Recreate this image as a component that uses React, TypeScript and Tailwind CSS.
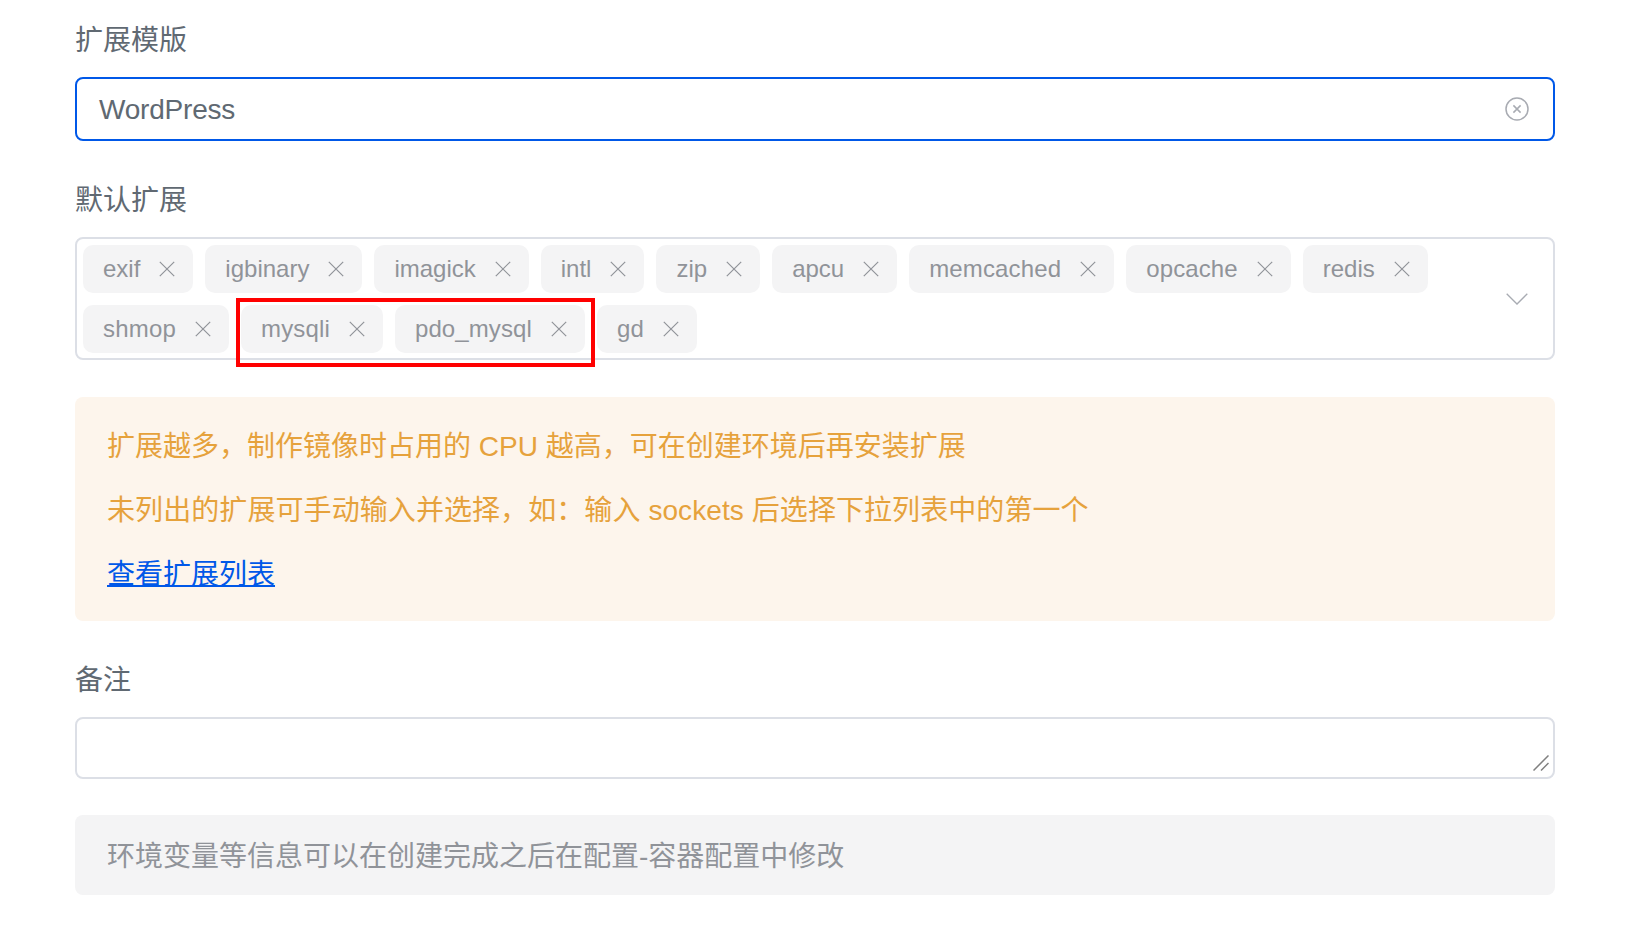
const FONT = "font-['Liberation_Sans','Noto_Sans_CJK_SC',sans-serif]";

function X({ className }: { className?: string }) {
  return (
    <svg viewBox="0 0 16 16" className={className} fill="none" stroke="currentColor" strokeWidth="1.2">
      <path d="M0.8 0.8 L15.2 15.2 M15.2 0.8 L0.8 15.2" />
    </svg>
  );
}

function Tag({ label, textClass }: { label: string; textClass?: string }) {
  return (
    <div className="flex h-12 items-center gap-[19px] rounded-[10px] bg-[#f4f4f5] pl-5 pr-[18px] text-[24px] text-[#909399]">
      <span className={textClass}>{label}</span>
      <X className="h-[16px] w-[16px]" />
    </div>
  );
}

const row1: [string, string?][] = [
  ["exif"],
  ["igbinary"],
  ["imagick"],
  ["intl"],
  ["zip"],
  ["apcu"],
  ["memcached", "tracking-[0.15px]"],
  ["opcache", "tracking-[0.1px]"],
  ["redis"],
];
const row2: [string, string?][] = [
  ["shmop", "tracking-[0.2px]"],
  ["mysqli", "tracking-[0.15px]"],
  ["pdo_mysql", "tracking-[0.1px]"],
  ["gd", "tracking-[0.2px]"],
];

function Label({ children, className }: { children: string; className?: string }) {
  return <div className={`mb-5 h-9 text-[28px] leading-[40px] text-[#606972] ${className ?? ""}`}>{children}</div>;
}

export default function App() {
  return (
    <div className={`${FONT} relative h-[932px] w-[1640px] overflow-hidden bg-white pl-[75px] pr-[85px] pt-[21px]`}>
      <Label>扩展模版</Label>

      <div className="flex h-16 items-center justify-between rounded-lg border-2 border-[#0058e8] pl-[22px] pr-6 text-[28px] text-[#606972]">
        <span className="pt-[2px] tracking-[-0.2px]">WordPress</span>
        <svg viewBox="0 0 24 24" className="h-6 w-6 text-[#a8abb2]" fill="none" stroke="currentColor" strokeWidth="1.5">
          <circle cx="12" cy="12" r="11" />
          <path d="M8.4 8.4 L15.6 15.6 M15.6 8.4 L8.4 15.6" />
        </svg>
      </div>

      <Label className="mt-10">默认扩展</Label>

      <div className="flex h-[123px] items-center justify-between rounded-lg border-2 border-[#dcdfe6] pl-[6px] pr-[25px]">
        <div className="flex flex-col gap-3">
          <div className="flex gap-3">
            {row1.map(([t, c]) => (
              <Tag key={t} label={t} textClass={c} />
            ))}
          </div>
          <div className="flex gap-3">
            {row2.map(([t, c]) => (
              <Tag key={t} label={t} textClass={c} />
            ))}
          </div>
        </div>
        <svg viewBox="0 0 22 12" className="h-3 w-[22px] text-[#a8abb2]" fill="none" stroke="currentColor" strokeWidth="1.3">
          <path d="M0.7 0.7 L11 11 L21.3 0.7" />
        </svg>
      </div>

      <div className="mt-[37px] flex h-[224px] flex-col justify-center gap-5 rounded-lg bg-[#fdf5ec] px-8 pt-1 text-[28px] leading-[44px] text-[#e6a23c]">
        <p>扩展越多，制作镜像时占用的 CPU 越高，可在创建环境后再安装扩展</p>
        <p className="tracking-[0.08px]">未列出的扩展可手动输入并选择，如：输入 sockets 后选择下拉列表中的第一个</p>
        <a className="text-[#0058e8] underline decoration-2">查看扩展列表</a>
      </div>

      <Label className="mt-10">备注</Label>

      <div className="relative h-[62px] rounded-lg border-2 border-[#dcdfe6]">
        <svg viewBox="0 0 16 16" className="absolute bottom-[6px] right-[4px] h-4 w-4 text-[#808080]" fill="none" stroke="currentColor" strokeWidth="1.5">
          <path d="M0.5 15.5 L15.5 0.5 M8 15.5 L15.5 8" />
        </svg>
      </div>

      <div className="mt-9 flex h-20 items-center rounded-lg bg-[#f4f4f5] px-8 pt-1 text-[28px] text-[#909399]">
        环境变量等信息可以在创建完成之后在配置-容器配置中修改
      </div>

      <div className="pointer-events-none absolute left-[236px] top-[298px] h-[69px] w-[359px] border-4 border-[#ff0000]" />
    </div>
  );
}
